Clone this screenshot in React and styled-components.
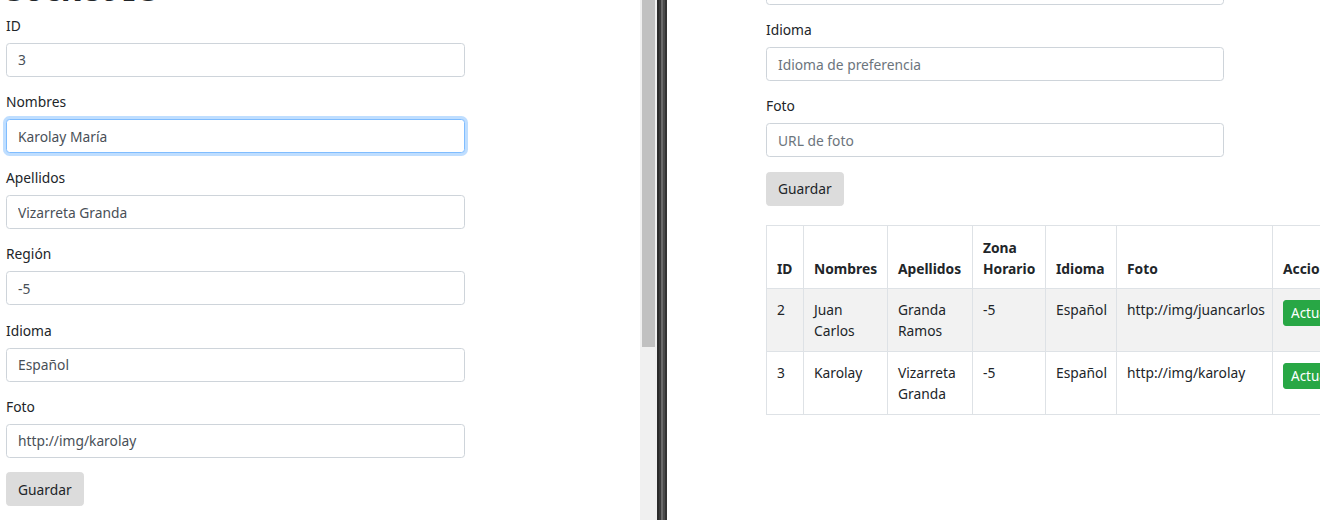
import React from 'react';
import styled, { createGlobalStyle } from 'styled-components';

const GlobalStyle = createGlobalStyle`
  html, body {
    margin: 0;
    padding: 0;
    background: #fff;
  }
  body {
    font-family: "Segoe UI", "Noto Sans", "Open Sans", Arial, sans-serif;
    font-size: 13.8px;
    line-height: 21px;
    color: #212529;
  }
  * {
    box-sizing: border-box;
  }
`;

const Screen = styled.div`
  display: flex;
  width: 1320px;
  height: 520px;
  overflow: hidden;
`;

const Pane = styled.div`
  flex: ${props => (props.grow ? '1' : '0 0 auto')};
  width: ${props => props.width || 'auto'};
  height: 100%;
  overflow: hidden;
  background: #fff;
`;

const PaneContent = styled.div`
  margin-top: ${props => props.offset};
  padding-left: ${props => props.inset};
  width: ${props => props.width};
`;

const Scrollbar = styled.div`
  flex: 0 0 17px;
  height: 100%;
  background: #f0f0f0;
  padding: 0 2px;
`;

const Thumb = styled.div`
  height: 347px;
  background: #c1c1c1;
`;

const Splitter = styled.div`
  flex: 0 0 10px;
  height: 100%;
  background: linear-gradient(
    to right,
    #2b2b2b 0,
    #2b2b2b 2px,
    #3a3a3a 2px,
    #3a3a3a 4px,
    #6a6a6a 4px,
    #6a6a6a 6px,
    #4a4a4a 6px,
    #4a4a4a 8px,
    #333 8px
  );
`;

const Title = styled.h1`
  margin: 0 0 7px;
  font-size: 32.4px;
  font-weight: 700;
  line-height: 1.2;
`;

const Group = styled.div`
  margin-bottom: 14.2px;
`;

const Label = styled.label`
  display: block;
  margin-bottom: 7px;
  line-height: 21px;
`;

const Input = styled.input`
  display: block;
  width: ${props => props.width || '459px'};
  height: 34px;
  padding: 5px 11px;
  font-family: inherit;
  font-size: 13.8px;
  color: #495057;
  background: #fff;
  border: 1px solid ${props => (props.focused ? '#80bdff' : '#ced4da')};
  border-radius: 3.6px;
  box-shadow: ${props => (props.focused ? '0 0 0 3px rgba(0, 123, 255, 0.25)' : 'none')};
  outline: none;

  &::placeholder {
    color: #6c757d;
  }
`;

const SaveButton = styled.button`
  display: inline-block;
  height: 34px;
  padding: 0 11px;
  font-family: inherit;
  font-size: 13.8px;
  color: #212529;
  background: #dcdcdc;
  border: 1px solid #dcdcdc;
  border-radius: 3.6px;
  margin-bottom: ${props => props.gap || '0'};
`;

const Table = styled.table`
  border-collapse: collapse;
  table-layout: fixed;
  width: 760px;
`;

const Th = styled.th`
  text-align: left;
  vertical-align: bottom;
  font-weight: 700;
  padding: 11px 10px 9px;
  border: 1px solid #dee2e6;
  line-height: 21px;
`;

const Row = styled.tr`
  background: ${props => (props.striped ? '#f2f2f2' : '#fff')};
`;

const Td = styled.td`
  vertical-align: top;
  padding: 10px;
  border: 1px solid #dee2e6;
  line-height: 21px;
  white-space: ${props => (props.nowrap ? 'nowrap' : 'normal')};
`;

const ActionButton = styled.button`
  display: inline-block;
  padding: 2px 7px;
  font-family: inherit;
  font-size: 13.5px;
  line-height: 20px;
  color: #fff;
  background: #28a745;
  border: 1px solid #28a745;
  border-radius: 3px;
  margin-right: 4px;
  margin-top: 1px;
`;

const DangerButton = styled(ActionButton)`
  background: #dc3545;
  border-color: #dc3545;
`;

const leftFields = [
  { label: 'ID', value: '3' },
  { label: 'Nombres', value: 'Karolay María', focused: true },
  { label: 'Apellidos', value: 'Vizarreta Granda' },
  { label: 'Región', value: '-5' },
  { label: 'Idioma', value: 'Español' },
  { label: 'Foto', value: 'http://img/karolay' },
];

const rightFields = [
  { label: 'Idioma', placeholder: 'Idioma de preferencia' },
  { label: 'Foto', placeholder: 'URL de foto' },
];

const columns = [
  { title: 'ID', width: 37 },
  { title: 'Nombres', width: 84 },
  { title: 'Apellidos', width: 85 },
  { title: 'Zona Horario', width: 73 },
  { title: 'Idioma', width: 71 },
  { title: 'Foto', width: 156 },
  { title: 'Acciones', width: 254 },
];

const users = [
  { id: 2, nombres: 'Juan Carlos', apellidos: 'Granda Ramos', zona: '-5', idioma: 'Español', foto: 'http://img/juancarlos' },
  { id: 3, nombres: 'Karolay', apellidos: 'Vizarreta Granda', zona: '-5', idioma: 'Español', foto: 'http://img/karolay' },
];

const App = () => (
  <>
    <GlobalStyle />
    <Screen>
      <Pane width="640px">
        <PaneContent offset="-31px" inset="6px">
          <Title>Socket IO</Title>
          {leftFields.map(field => (
            <Group key={field.label}>
              <Label>{field.label}</Label>
              <Input defaultValue={field.value} focused={field.focused} readOnly />
            </Group>
          ))}
          <SaveButton>Guardar</SaveButton>
        </PaneContent>
      </Pane>
      <Scrollbar>
        <Thumb />
      </Scrollbar>
      <Splitter />
      <Pane grow>
        <PaneContent offset="-29px" inset="99px" width="900px">
          <Group>
            <Input width="458px" placeholder="Zona horaria" readOnly />
          </Group>
          {rightFields.map(field => (
            <Group key={field.label}>
              <Label>{field.label}</Label>
              <Input width="458px" placeholder={field.placeholder} readOnly />
            </Group>
          ))}
          <SaveButton gap="19px">Guardar</SaveButton>
          <Table>
            <colgroup>
              {columns.map(col => (
                <col key={col.title} style={{ width: col.width }} />
              ))}
            </colgroup>
            <thead>
              <tr>
                {columns.map(col => (
                  <Th key={col.title}>{col.title}</Th>
                ))}
              </tr>
            </thead>
            <tbody>
              {users.map((user, i) => (
                <Row key={user.id} striped={i % 2 === 0}>
                  <Td>{user.id}</Td>
                  <Td>{user.nombres}</Td>
                  <Td>{user.apellidos}</Td>
                  <Td>{user.zona}</Td>
                  <Td>{user.idioma}</Td>
                  <Td nowrap>{user.foto}</Td>
                  <Td nowrap>
                    <ActionButton>Actualizar</ActionButton>
                    <DangerButton>Eliminar</DangerButton>
                  </Td>
                </Row>
              ))}
            </tbody>
          </Table>
        </PaneContent>
      </Pane>
    </Screen>
  </>
);

export default App;
